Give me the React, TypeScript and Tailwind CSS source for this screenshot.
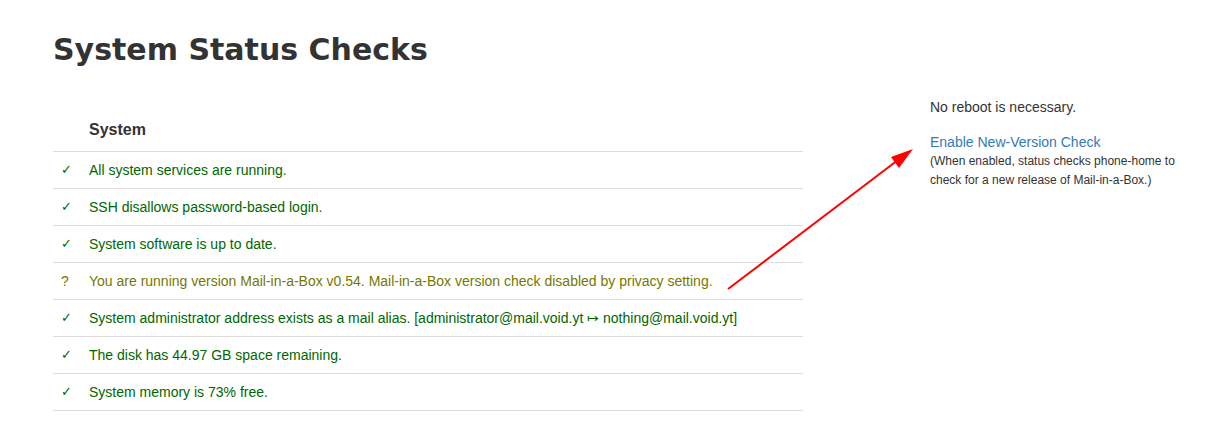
import React from 'react';

type Check = { status: 'ok' | 'warning'; text: string };

const checks: Check[] = [
  { status: 'ok', text: 'All system services are running.' },
  { status: 'ok', text: 'SSH disallows password-based login.' },
  { status: 'ok', text: 'System software is up to date.' },
  {
    status: 'warning',
    text: 'You are running version Mail-in-a-Box v0.54. Mail-in-a-Box version check disabled by privacy setting.',
  },
  {
    status: 'ok',
    text: 'System administrator address exists as a mail alias. [administrator@mail.void.yt \u21a6 nothing@mail.void.yt]',
  },
  { status: 'ok', text: 'The disk has 44.97 GB space remaining.' },
  { status: 'ok', text: 'System memory is 73% free.' },
];

const CheckRow: React.FC<{ check: Check }> = ({ check }) => {
  const ok = check.status === 'ok';
  return (
    <div className={`flex border-b border-[#ddd] ${ok ? 'text-[#060]' : 'text-[#770]'}`}>
      {ok ? (
        <div className="w-[28px] shrink-0 py-2 pl-2 font-['DejaVu_Sans',sans-serif] text-[13px] leading-5">
          {'\u2713'}
        </div>
      ) : (
        <div className="w-[28px] shrink-0 py-2 pl-2 leading-5">?</div>
      )}
      <div className="py-2 pl-2 leading-5">{check.text}</div>
    </div>
  );
};

export default function App() {
  return (
    <div className="relative min-h-[434px] bg-white pl-[53px] font-['Liberation_Sans',Arial,sans-serif] text-[14px] text-[#333]">
      <h1 className="pt-[30px] font-['DejaVu_Sans',sans-serif] text-[30px] font-bold leading-10 text-[#333]">
        System Status Checks
      </h1>

      <div className="mt-[29px] flex items-start gap-[127px]">
        {/* Checks table */}
        <div className="w-[750px] shrink-0">
          <div className="flex border-b border-[#ddd] pt-[21px] pb-[11px]">
            <div className="w-[28px] shrink-0" />
            <div className="pl-2 text-[16px] font-bold leading-5">System</div>
          </div>
          {checks.map((c, i) => (
            <CheckRow key={i} check={c} />
          ))}
        </div>

        {/* Side panel */}
        <div className="-mt-[2px] w-[260px]">
          <p className="leading-5">No reboot is necessary.</p>
          <a className="mt-[15px] block leading-5 text-[#337ab7]" href="#">
            Enable New-Version Check
          </a>
          <p className="text-[12px] leading-[19px]">
            (When enabled, status checks phone-home to check for a new release of Mail-in-a-Box.)
          </p>
        </div>
      </div>

      {/* Annotation arrow */}
      <svg className="pointer-events-none absolute left-0 top-0" width="1231" height="434">
        <line x1="728" y1="289" x2="898" y2="160" stroke="#f00" strokeWidth="2" />
        <polygon points="913,149 891,157 899,168" fill="#f00" />
      </svg>
    </div>
  );
}
